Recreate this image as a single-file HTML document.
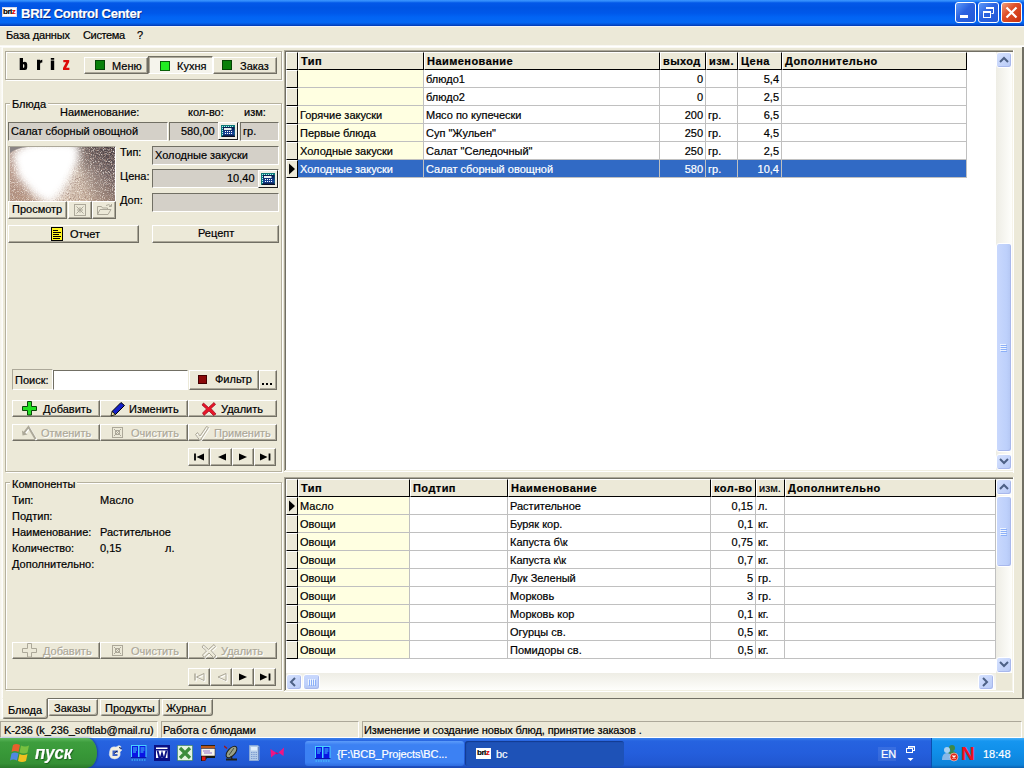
<!DOCTYPE html><html><head><meta charset="utf-8"><title>BRIZ Control Center</title><style>
*{box-sizing:border-box;margin:0;padding:0}
html,body{width:1024px;height:768px;overflow:hidden;background:#ECE9D8}
body{font-family:"Liberation Sans",sans-serif;font-size:11px;color:#000;position:relative}
.a{position:absolute}
.t{position:absolute;white-space:nowrap;line-height:13px;height:13px;-webkit-text-stroke:0.2px currentColor}
.b{font-weight:bold}
.w{color:#fff}
.dis{color:#ACA899;text-shadow:1px 1px 0 #fff}
/* classic raised button */
.btn{position:absolute;background:#ECE9D8;border:1px solid;border-color:#fff #716F64 #716F64 #fff;box-shadow:inset -1px -1px 0 #ACA899}
.btnd{position:absolute;background:#F5F4EC;border:1px solid;border-color:#716F64 #fff #fff #716F64;box-shadow:inset 1px 1px 0 #ACA899}
/* sunken gray field */
.fld{position:absolute;background:#D4D0C8;border:1px solid;border-color:#716F64 #fff #fff #716F64}
.sunk{position:absolute;border:1px solid;border-color:#ACA899 #fff #fff #ACA899}
.grp{position:absolute;border:1px solid #D0D0BF;border-radius:3px}
.hl{position:absolute;background:#C0C0C0}
</style></head><body><div class="a" style="left:0px;top:0px;width:1024px;height:26px;background:linear-gradient(180deg,#3D97FF 0%,#2A84F8 5%,#0458E8 11%,#0054E3 30%,#0058EA 50%,#0264F4 66%,#0468F4 86%,#0456DC 93%,#0038B0 100%);"></div><div class="a" style="left:0px;top:26px;width:1024px;height:1px;background:#F2F4F8;"></div><div class="a" style="left:2px;top:7px;width:15px;height:10px;background:#fff;border:1px solid #d8d8e8"></div><div class="t b" style="left:3px;top:6px;font-size:8px;line-height:11px;letter-spacing:-0.5px"><span style="color:#000">bri</span><span style="color:#e00000">z</span></div><div class="t b w" style="left:21px;top:6px;font-size:13px;line-height:16px;height:16px;letter-spacing:-0.25px;text-shadow:1px 1px 0 #0A2A80">BRIZ Control Center</div><div class="a" style="left:955px;top:2px;width:21px;height:21px;border:1px solid #fff;border-radius:3px;background:linear-gradient(135deg,#5E9BFA 0%,#2B62E0 45%,#2258D8 100%)"><div class="a" style="left:4px;top:12px;width:8px;height:3px;background:#fff"></div></div><div class="a" style="left:978px;top:2px;width:21px;height:21px;border:1px solid #fff;border-radius:3px;background:linear-gradient(135deg,#5E9BFA 0%,#2B62E0 45%,#2258D8 100%)"><svg class="a" style="left:0;top:0" width="19" height="19"><path d="M7.5 4.5h7v6h-2" fill="none" stroke="#fff" stroke-width="1"/><path d="M7 5h8" stroke="#fff" stroke-width="2"/><rect x="4.5" y="8.5" width="7" height="6" fill="none" stroke="#fff"/><path d="M4 9h8" stroke="#fff" stroke-width="2"/></svg></div><div class="a" style="left:1001px;top:2px;width:21px;height:21px;border:1px solid #fff;border-radius:3px;background:linear-gradient(135deg,#F0A080 0%,#E05028 40%,#C83010 100%)"><svg class="a" style="left:0;top:0" width="19" height="19"><path d="M4.500 4.500l10 10M14.500 4.500l-10 10" stroke="#fff" stroke-width="2.2"/></svg></div><div class="t " style="left:6px;top:29px;font-size:11px;letter-spacing:-0.15px">База данных</div><div class="t " style="left:83px;top:29px;font-size:11px;letter-spacing:-0.35px">Система</div><div class="t " style="left:137px;top:29px;font-size:11px">?</div><div class="a" style="left:0px;top:45px;width:1024px;height:3px;background:linear-gradient(180deg,#F6F4EC,#FFFFFF,#F8F6EE);"></div><div class="a" style="left:0px;top:47px;width:3px;height:672px;background:linear-gradient(90deg,#F4F2E8,#FFFFFF);"></div><div class="a" style="left:6px;top:52px;width:277px;height:29px;border:1px solid #fff"></div><div class="a" style="left:5px;top:51px;width:277px;height:29px;border:1px solid #ACA899"></div><svg class="a" style="left:19px;top:57px" width="54" height="14"><path fill-rule="evenodd" d="M0.700 1h3.300v4.300q0.900-0.600 1.900-0.600q2.300 0 2.300 2.500v3.300q0 2.500-2.300 2.500h-5.200zM4 7.200v3.600h0.600q0.700 0 0.700-0.700v-2.200q0-0.700-0.700-0.700z" fill="#000"/><path d="M18 2.800h3.100v0.900q0.800-0.900 2.200-0.900v2.700q-2.200 0-2.200 1.400v6.100h-3.100z" fill="#000"/><path d="M31.800 1h3.400v1.800h-3.400zM31.800 3.600h3.400v9.400h-3.400z" fill="#000"/><path d="M44.300 3h5.900v2l-3 5.700h3.200v2.300h-6.400v-2l3.100-5.700h-2.800z" fill="#DD0A0A"/></svg><div class="btn" style="left:84px;top:57px;width:64px;height:17px;"></div><div class="a" style="left:95px;top:60px;width:10px;height:10px;background:#0A800A;border:1px solid #044404"></div><div class="t " style="left:112px;top:60px;">Меню</div><div class="btnd" style="left:148px;top:56px;width:65px;height:18px;"></div><div class="a" style="left:160px;top:61px;width:10px;height:10px;background:#22EE22;border:1px solid #086008"></div><div class="t " style="left:177px;top:60px;">Кухня</div><div class="btn" style="left:213px;top:57px;width:64px;height:17px;"></div><div class="a" style="left:222px;top:60px;width:10px;height:10px;background:#0A800A;border:1px solid #044404"></div><div class="t " style="left:240px;top:60px;">Заказ</div><div class="a" style="left:6px;top:104px;width:277px;height:369px;border:1px solid #fff"></div><div class="a" style="left:5px;top:103px;width:277px;height:369px;border:1px solid #B5B19E"></div><div class="t " style="left:10px;top:98px;background:#ECE9D8;padding:0 2px">Блюда</div><div class="t " style="left:60px;top:106px;">Наименование:</div><div class="t " style="left:188px;top:106px;">кол-во:</div><div class="t " style="left:244px;top:106px;">изм:</div><div class="fld" style="left:8px;top:122px;width:160px;height:19px;"></div><div class="t " style="left:11px;top:125px;">Салат сборный овощной</div><div class="fld" style="left:169px;top:122px;width:70px;height:19px;"></div><div class="t " style="left:181px;top:125px;">580,00</div><div class="fld" style="left:240px;top:122px;width:39px;height:19px;"></div><div class="t " style="left:243px;top:125px;">гр.</div><div class="a" style="left:218px;top:122px;width:20px;height:18px;background:#F0EEE4;border:1px solid;border-color:#fff #202020 #202020 #fff"><svg class="a" style="left:2px;top:2px" width="14" height="12"><defs><linearGradient id="cg218" x1="0" y1="0" x2="0" y2="1"><stop offset="0" stop-color="#0A1848"/><stop offset="0.7" stop-color="#1848A0"/><stop offset="1" stop-color="#081030"/></linearGradient></defs><rect width="14" height="12" fill="#0E7878"/><rect x="2" y="2" width="11.500" height="9.500" fill="url(#cg218)"/><path d="M1 1.500h12" stroke="#A8F4F4" stroke-dasharray="1 1"/><path d="M1.500 1v10" stroke="#A8F4F4" stroke-dasharray="1 1"/><rect x="3" y="3" width="7.500" height="2" fill="#E8F0F0"/><rect x="4" y="6" width="1" height="1" fill="#fff"/><rect x="4" y="8" width="1" height="1" fill="#fff"/><rect x="6" y="6" width="1" height="1" fill="#fff"/><rect x="6" y="8" width="1" height="1" fill="#fff"/><rect x="8" y="6" width="1" height="1" fill="#fff"/><rect x="8" y="8" width="1" height="1" fill="#fff"/><rect x="10" y="6" width="1" height="1" fill="#fff"/><rect x="10" y="8" width="1" height="1" fill="#fff"/><path d="M1 11.500h13" stroke="#081028"/></svg></div><div class="sunk" style="left:8px;top:146px;width:108px;height:56px;border-color:#ACA899 #fff #fff #ACA899;background:#D8D4C8"></div><svg class="a" style="left:10px;top:147px" width="105" height="54" viewBox="0 0 106 54" preserveAspectRatio="none"><defs><linearGradient id="pg" x1="0" y1="0.2" x2="1" y2="0"><stop offset="0" stop-color="#BC9C8C"/><stop offset="0.3" stop-color="#F0E4D8"/><stop offset="0.56" stop-color="#D8C8B8"/><stop offset="0.68" stop-color="#A09088"/><stop offset="0.82" stop-color="#766868"/><stop offset="1" stop-color="#564C52"/></linearGradient><linearGradient id="pg2" x1="0" y1="0" x2="0" y2="1"><stop offset="0" stop-color="#403838" stop-opacity="0.2"/><stop offset="0.45" stop-color="#806860" stop-opacity="0"/><stop offset="1" stop-color="#B08868" stop-opacity="0.3"/></linearGradient><radialGradient id="pg3" cx="1" cy="0" r="0.6"><stop offset="0" stop-color="#342C32" stop-opacity="0.55"/><stop offset="1" stop-color="#342C32" stop-opacity="0"/></radialGradient><filter id="pn" x="0" y="0" width="100%" height="100%"><feTurbulence type="fractalNoise" baseFrequency="0.8" numOctaves="2" seed="7"/><feColorMatrix type="matrix" values="0 0 0 0 0.36  0 0 0 0 0.24  0 0 0 0 0.2  0 0 0 2.6 -1.15"/></filter><filter id="pn2" x="0" y="0" width="100%" height="100%"><feTurbulence type="fractalNoise" baseFrequency="0.9" numOctaves="1" seed="11"/><feColorMatrix type="matrix" values="0 0 0 0 1  0 0 0 0 0.95  0 0 0 0 0.88  0 2.6 0 0 -1.3"/></filter><filter id="pb" x="-40%" y="-40%" width="180%" height="180%"><feGaussianBlur stdDeviation="4.5"/></filter></defs><rect width="106" height="54" fill="url(#pg)"/><rect width="106" height="54" fill="url(#pg2)"/><rect width="106" height="54" fill="url(#pg3)"/><rect width="106" height="54" filter="url(#pn)"/><rect width="106" height="54" filter="url(#pn2)"/><path d="M2 6L20 -4L68 -4L70 10L62 28L54 44L42 58L26 50L8 30z" fill="#fff" filter="url(#pb)"/><path d="M12 6L62 0L62 14L48 36L28 36L14 22z" fill="#fff"  filter="url(#pb)"/><path d="M0 0h17q-11 1-17 6z" fill="#8A8484"/></svg><div class="btn" style="left:8px;top:201px;width:59px;height:18px;"></div><div class="t " style="left:12px;top:203px;">Просмотр</div><div class="btn" style="left:68px;top:201px;width:24px;height:18px;"></div><svg class="a" style="left:74px;top:204px" width="13" height="13"><rect x="0.5" y="0.5" width="11" height="11" fill="none" stroke="#ACA899"/><path d="M2.500 2.500l7 7M9.500 2.500l-7 7M6 3.500l2.500 2.500l-2.500 2.500l-2.500-2.500z" fill="none" stroke="#ACA899"/></svg><div class="btn" style="left:92px;top:201px;width:24px;height:18px;"></div><svg class="a" style="left:96px;top:203px" width="17" height="13"><path d="M1.500 11.500v-8h4l1 1.500h5v2M1.500 11.500l2.500-5h11l-3 5z" fill="none" stroke="#ACA899"/><path d="M10 2.500q3-2 5 0.500M15.500 1v2.500h-2.500" fill="none" stroke="#ACA899"/></svg><div class="t " style="left:120px;top:146px;">Тип:</div><div class="t " style="left:120px;top:170px;">Цена:</div><div class="t " style="left:120px;top:194px;">Доп:</div><div class="fld" style="left:152px;top:146px;width:127px;height:19px;"></div><div class="t " style="left:155px;top:149px;">Холодные закуски</div><div class="fld" style="left:152px;top:169px;width:127px;height:19px;"></div><div class="t " style="left:227px;top:172px;">10,40</div><div class="a" style="left:258px;top:170px;width:20px;height:18px;background:#F0EEE4;border:1px solid;border-color:#fff #202020 #202020 #fff"><svg class="a" style="left:2px;top:2px" width="14" height="12"><defs><linearGradient id="cg258" x1="0" y1="0" x2="0" y2="1"><stop offset="0" stop-color="#0A1848"/><stop offset="0.7" stop-color="#1848A0"/><stop offset="1" stop-color="#081030"/></linearGradient></defs><rect width="14" height="12" fill="#0E7878"/><rect x="2" y="2" width="11.500" height="9.500" fill="url(#cg258)"/><path d="M1 1.500h12" stroke="#A8F4F4" stroke-dasharray="1 1"/><path d="M1.500 1v10" stroke="#A8F4F4" stroke-dasharray="1 1"/><rect x="3" y="3" width="7.500" height="2" fill="#E8F0F0"/><rect x="4" y="6" width="1" height="1" fill="#fff"/><rect x="4" y="8" width="1" height="1" fill="#fff"/><rect x="6" y="6" width="1" height="1" fill="#fff"/><rect x="6" y="8" width="1" height="1" fill="#fff"/><rect x="8" y="6" width="1" height="1" fill="#fff"/><rect x="8" y="8" width="1" height="1" fill="#fff"/><rect x="10" y="6" width="1" height="1" fill="#fff"/><rect x="10" y="8" width="1" height="1" fill="#fff"/><path d="M1 11.500h13" stroke="#081028"/></svg></div><div class="fld" style="left:152px;top:193px;width:127px;height:19px;"></div><div class="btn" style="left:8px;top:225px;width:131px;height:18px;"></div><div class="a" style="left:51px;top:227px;width:12px;height:14px;background:#FFF420;border:1px solid #000"></div><div class="a" style="left:53px;top:230px;width:5px;height:1px;background:#000;"></div><div class="a" style="left:53px;top:232px;width:8px;height:1px;background:#000;"></div><div class="a" style="left:53px;top:234px;width:6px;height:1px;background:#000;"></div><div class="a" style="left:53px;top:236px;width:8px;height:1px;background:#000;"></div><div class="a" style="left:53px;top:238px;width:7px;height:1px;background:#000;"></div><div class="t " style="left:70px;top:228px;">Отчет</div><div class="btn" style="left:152px;top:225px;width:127px;height:18px;"></div><div class="t " style="left:198px;top:227px;">Рецепт</div><div class="fld" style="left:12px;top:369px;width:41px;height:21px;background:#ECE9D8;box-shadow:none;border-color:#ACA899 #fff #fff #ACA899"></div><div class="t " style="left:15px;top:374px;">Поиск:</div><div class="fld" style="left:53px;top:370px;width:135px;height:20px;background:#fff"></div><div class="btn" style="left:189px;top:370px;width:70px;height:20px;"></div><div class="a" style="left:198px;top:375px;width:9px;height:9px;background:#8B0A0A;border:1px solid #400"></div><div class="t " style="left:215px;top:373px;">Фильтр</div><div class="btn" style="left:259px;top:370px;width:18px;height:20px;"></div><div class="a" style="left:262px;top:383px;width:2px;height:2px;background:#000;"></div><div class="a" style="left:266px;top:383px;width:2px;height:2px;background:#000;"></div><div class="a" style="left:270px;top:383px;width:2px;height:2px;background:#000;"></div><div class="btn" style="left:12px;top:400px;width:88px;height:17px;"></div><svg class="a" style="left:22px;top:401px" width="16" height="15"><path d="M5.500 0.500h4v5h5v4h-5v4.500h-4v-4.500h-5v-4h5z" fill="#22E022" stroke="#0A480A"/></svg><div class="t " style="left:43px;top:403px;">Добавить</div><div class="btn" style="left:100px;top:400px;width:88px;height:17px;"></div><svg class="a" style="left:110px;top:401px" width="16" height="16"><path d="M11 1.500l3.500 3l-9 9l-3.500-3z" fill="#1420C8" stroke="#000"/><path d="M2 10.500l3.500 3l-4.500 1.500z" fill="#F4E8A8" stroke="#000" stroke-width="0.800"/></svg><div class="t " style="left:129px;top:403px;">Изменить</div><div class="btn" style="left:188px;top:400px;width:89px;height:17px;"></div><svg class="a" style="left:201px;top:401px" width="16" height="16"><path d="M2.500 2l5 4.500l5.500-5l1.500 2l-4.500 4l5 5.500l-2.500 1.500l-4.500-4.500l-5 4.500l-1.500-2.500l4-4l-4.500-4z" fill="#E81428" stroke="#98081C" stroke-width="0.700"/></svg><div class="t " style="left:221px;top:403px;">Удалить</div><div class="btn" style="left:12px;top:424px;width:88px;height:17px;"></div><svg class="a" style="left:21px;top:425px" width="18" height="16"><path d="M3.500 9.500l5-6.500l7 12" fill="none" stroke="#fff" stroke-width="2"/><path d="M2.500 8.500l5-6.500l7 12" fill="none" stroke="#ACA899" stroke-width="2"/><path d="M1 5.500l0.500 5l5-1z" fill="#ACA899"/></svg><div class="t dis" style="left:41px;top:427px;">Отменить</div><div class="btn" style="left:100px;top:424px;width:88px;height:17px;"></div><svg class="a" style="left:112px;top:427px" width="12" height="12"><rect x="0.5" y="0.5" width="10" height="10" fill="none" stroke="#ACA899"/><path d="M2 2l7 7M9 2l-7 7M3.5 3.5h4v4h-4z" fill="none" stroke="#ACA899"/></svg><div class="t dis" style="left:131px;top:427px;">Очистить</div><div class="btn" style="left:188px;top:424px;width:89px;height:17px;"></div><svg class="a" style="left:193px;top:400px;top:425px" width="18" height="16"><path d="M2.500 9.500l2-2l2.500 3.500l6.500-9.500l2 1l-8.500 13z" fill="none" stroke="#fff" transform="translate(1,1)"/><path d="M2.500 9.500l2-2l2.500 3.500l6.500-9.500l2 1l-8.500 13z" fill="none" stroke="#ACA899"/></svg><div class="t dis" style="left:214px;top:427px;">Применить</div><div class="btn" style="left:188px;top:448px;width:22px;height:18px;"></div><svg class="a" style="left:189px;top:450px" width="20" height="14"><path d="M6 3.500v7" stroke="#000" stroke-width="1.800"/><path d="M15 3.500v7l-7.500-3.500z" fill="#000"/></svg><div class="btn" style="left:210px;top:448px;width:22px;height:18px;"></div><svg class="a" style="left:211px;top:450px" width="20" height="14"><path d="M15 3.500v7l-8-3.500z" fill="#000"/></svg><div class="btn" style="left:232px;top:448px;width:22px;height:18px;"></div><svg class="a" style="left:233px;top:450px" width="20" height="14"><path d="M6 3.500v7l8-3.500z" fill="#000"/></svg><div class="btn" style="left:254px;top:448px;width:22px;height:18px;"></div><svg class="a" style="left:255px;top:450px" width="20" height="14"><path d="M14.500 3.500v7" stroke="#000" stroke-width="1.800"/><path d="M5 3.500v7l7.500-3.500z" fill="#000"/></svg><div class="a" style="left:284px;top:50px;width:730px;height:1px;background:#ACA899;"></div><div class="a" style="left:284px;top:50px;width:1px;height:422px;background:#ACA899;"></div><div class="a" style="left:285px;top:51px;width:728px;height:1px;background:#716F64;"></div><div class="a" style="left:285px;top:51px;width:1px;height:420px;background:#716F64;"></div><div class="a" style="left:286px;top:52px;width:710px;height:418px;background:#fff;"></div><div class="a" style="left:1012px;top:52px;width:1px;height:420px;background:#F6F4EA;"></div><div class="a" style="left:1013px;top:50px;width:1px;height:423px;background:#fff;"></div><div class="a" style="left:285px;top:470px;width:728px;height:1px;background:#F1EFE2;"></div><div class="a" style="left:284px;top:471px;width:730px;height:1px;background:#fff;"></div><div class="a" style="left:1022px;top:47px;width:2px;height:652px;background:#716F64;"></div><div class="a" style="left:996px;top:52px;width:16px;height:418px;background:linear-gradient(90deg,#EEEDE5,#FEFEFB);"></div><div class="a" style="left:996px;top:52px;width:16px;height:16px;border:1px solid #fff;border-radius:3px;background:linear-gradient(135deg,#D6E2FF,#B8CAF6);box-shadow:inset -1px -1px 0 #A8B8EC"></div><svg class="a" style="left:999px;top:56px" width="10" height="10"><path d="M1 6l4-4l4 4" fill="none" stroke="#4D6185" stroke-width="2"/></svg><div class="a" style="left:996px;top:454px;width:16px;height:16px;border:1px solid #fff;border-radius:3px;background:linear-gradient(135deg,#D6E2FF,#B8CAF6);box-shadow:inset -1px -1px 0 #A8B8EC"></div><svg class="a" style="left:999px;top:457px" width="10" height="10"><path d="M1 2l4 4l4-4" fill="none" stroke="#4D6185" stroke-width="2"/></svg><div class="a" style="left:996px;top:243px;width:16px;height:209px;border:1px solid #fff;border-radius:3px;background:linear-gradient(90deg,#C9D8FD,#BDD0FB 70%,#B4C6F2);box-shadow:inset -1px -1px 0 #A8B8EC"></div><div class="a" style="left:1000px;top:344px;width:6px;height:1px;background:#EEF4FE;"></div><div class="a" style="left:1001px;top:345px;width:6px;height:1px;background:#8CB0F8;"></div><div class="a" style="left:1000px;top:346px;width:6px;height:1px;background:#EEF4FE;"></div><div class="a" style="left:1001px;top:347px;width:6px;height:1px;background:#8CB0F8;"></div><div class="a" style="left:1000px;top:348px;width:6px;height:1px;background:#EEF4FE;"></div><div class="a" style="left:1001px;top:349px;width:6px;height:1px;background:#8CB0F8;"></div><div class="a" style="left:1000px;top:350px;width:6px;height:1px;background:#EEF4FE;"></div><div class="a" style="left:1001px;top:351px;width:6px;height:1px;background:#8CB0F8;"></div><div class="a" style="left:286px;top:52px;width:12px;height:18px;background:#ECE9D8;border-left:1px solid #fff;border-top:1px solid #fff;border-right:1px solid #000;border-bottom:1px solid #000"></div><div class="a" style="left:298px;top:52px;width:126px;height:18px;background:#ECE9D8;border-left:1px solid #fff;border-top:1px solid #fff;border-right:1px solid #000;border-bottom:1px solid #000"></div><div class="t b" style="left:301px;top:55px;letter-spacing:0.45px">Тип</div><div class="a" style="left:424px;top:52px;width:236px;height:18px;background:#ECE9D8;border-left:1px solid #fff;border-top:1px solid #fff;border-right:1px solid #000;border-bottom:1px solid #000"></div><div class="t b" style="left:427px;top:55px;letter-spacing:0.45px">Наименование</div><div class="a" style="left:660px;top:52px;width:46px;height:18px;background:#ECE9D8;border-left:1px solid #fff;border-top:1px solid #fff;border-right:1px solid #000;border-bottom:1px solid #000"></div><div class="t b" style="left:663px;top:55px;letter-spacing:0.45px">выход</div><div class="a" style="left:706px;top:52px;width:32px;height:18px;background:#ECE9D8;border-left:1px solid #fff;border-top:1px solid #fff;border-right:1px solid #000;border-bottom:1px solid #000"></div><div class="t b" style="left:709px;top:55px;letter-spacing:0.45px">изм.</div><div class="a" style="left:738px;top:52px;width:44px;height:18px;background:#ECE9D8;border-left:1px solid #fff;border-top:1px solid #fff;border-right:1px solid #000;border-bottom:1px solid #000"></div><div class="t b" style="left:741px;top:55px;letter-spacing:0.45px">Цена</div><div class="a" style="left:782px;top:52px;width:185px;height:18px;background:#ECE9D8;border-left:1px solid #fff;border-top:1px solid #fff;border-right:1px solid #000;border-bottom:1px solid #000"></div><div class="t b" style="left:785px;top:55px;letter-spacing:0.45px">Дополнительно</div><div class="a" style="left:286px;top:70px;width:12px;height:18px;background:#ECE9D8;border-left:1px solid #fff;border-top:1px solid #fff;border-right:1px solid #000;border-bottom:1px solid #000"></div><div class="a" style="left:298px;top:70px;width:126px;height:18px;background:#FFFFE1;border-right:1px solid #C0C0C0;border-bottom:1px solid #C0C0C0"></div><div class="a" style="left:424px;top:70px;width:236px;height:18px;background:#fff;border-right:1px solid #C0C0C0;border-bottom:1px solid #C0C0C0"></div><div class="t " style="left:426px;top:73px;">блюдо1</div><div class="a" style="left:660px;top:70px;width:46px;height:18px;background:#fff;border-right:1px solid #C0C0C0;border-bottom:1px solid #C0C0C0"></div><div class="t " style="left:660px;top:73px;width:43px;text-align:right">0</div><div class="a" style="left:706px;top:70px;width:32px;height:18px;background:#fff;border-right:1px solid #C0C0C0;border-bottom:1px solid #C0C0C0"></div><div class="a" style="left:738px;top:70px;width:44px;height:18px;background:#fff;border-right:1px solid #C0C0C0;border-bottom:1px solid #C0C0C0"></div><div class="t " style="left:738px;top:73px;width:41px;text-align:right">5,4</div><div class="a" style="left:782px;top:70px;width:185px;height:18px;background:#fff;border-right:1px solid #C0C0C0;border-bottom:1px solid #C0C0C0"></div><div class="a" style="left:286px;top:88px;width:12px;height:18px;background:#ECE9D8;border-left:1px solid #fff;border-top:1px solid #fff;border-right:1px solid #000;border-bottom:1px solid #000"></div><div class="a" style="left:298px;top:88px;width:126px;height:18px;background:#FFFFE1;border-right:1px solid #C0C0C0;border-bottom:1px solid #C0C0C0"></div><div class="a" style="left:424px;top:88px;width:236px;height:18px;background:#fff;border-right:1px solid #C0C0C0;border-bottom:1px solid #C0C0C0"></div><div class="t " style="left:426px;top:91px;">блюдо2</div><div class="a" style="left:660px;top:88px;width:46px;height:18px;background:#fff;border-right:1px solid #C0C0C0;border-bottom:1px solid #C0C0C0"></div><div class="t " style="left:660px;top:91px;width:43px;text-align:right">0</div><div class="a" style="left:706px;top:88px;width:32px;height:18px;background:#fff;border-right:1px solid #C0C0C0;border-bottom:1px solid #C0C0C0"></div><div class="a" style="left:738px;top:88px;width:44px;height:18px;background:#fff;border-right:1px solid #C0C0C0;border-bottom:1px solid #C0C0C0"></div><div class="t " style="left:738px;top:91px;width:41px;text-align:right">2,5</div><div class="a" style="left:782px;top:88px;width:185px;height:18px;background:#fff;border-right:1px solid #C0C0C0;border-bottom:1px solid #C0C0C0"></div><div class="a" style="left:286px;top:106px;width:12px;height:18px;background:#ECE9D8;border-left:1px solid #fff;border-top:1px solid #fff;border-right:1px solid #000;border-bottom:1px solid #000"></div><div class="a" style="left:298px;top:106px;width:126px;height:18px;background:#FFFFE1;border-right:1px solid #C0C0C0;border-bottom:1px solid #C0C0C0"></div><div class="t " style="left:300px;top:109px;">Горячие закуски</div><div class="a" style="left:424px;top:106px;width:236px;height:18px;background:#fff;border-right:1px solid #C0C0C0;border-bottom:1px solid #C0C0C0"></div><div class="t " style="left:426px;top:109px;">Мясо по купечески</div><div class="a" style="left:660px;top:106px;width:46px;height:18px;background:#fff;border-right:1px solid #C0C0C0;border-bottom:1px solid #C0C0C0"></div><div class="t " style="left:660px;top:109px;width:43px;text-align:right">200</div><div class="a" style="left:706px;top:106px;width:32px;height:18px;background:#fff;border-right:1px solid #C0C0C0;border-bottom:1px solid #C0C0C0"></div><div class="t " style="left:708px;top:109px;">гр.</div><div class="a" style="left:738px;top:106px;width:44px;height:18px;background:#fff;border-right:1px solid #C0C0C0;border-bottom:1px solid #C0C0C0"></div><div class="t " style="left:738px;top:109px;width:41px;text-align:right">6,5</div><div class="a" style="left:782px;top:106px;width:185px;height:18px;background:#fff;border-right:1px solid #C0C0C0;border-bottom:1px solid #C0C0C0"></div><div class="a" style="left:286px;top:124px;width:12px;height:18px;background:#ECE9D8;border-left:1px solid #fff;border-top:1px solid #fff;border-right:1px solid #000;border-bottom:1px solid #000"></div><div class="a" style="left:298px;top:124px;width:126px;height:18px;background:#FFFFE1;border-right:1px solid #C0C0C0;border-bottom:1px solid #C0C0C0"></div><div class="t " style="left:300px;top:127px;">Первые блюда</div><div class="a" style="left:424px;top:124px;width:236px;height:18px;background:#fff;border-right:1px solid #C0C0C0;border-bottom:1px solid #C0C0C0"></div><div class="t " style="left:426px;top:127px;">Суп "Жульен"</div><div class="a" style="left:660px;top:124px;width:46px;height:18px;background:#fff;border-right:1px solid #C0C0C0;border-bottom:1px solid #C0C0C0"></div><div class="t " style="left:660px;top:127px;width:43px;text-align:right">250</div><div class="a" style="left:706px;top:124px;width:32px;height:18px;background:#fff;border-right:1px solid #C0C0C0;border-bottom:1px solid #C0C0C0"></div><div class="t " style="left:708px;top:127px;">гр.</div><div class="a" style="left:738px;top:124px;width:44px;height:18px;background:#fff;border-right:1px solid #C0C0C0;border-bottom:1px solid #C0C0C0"></div><div class="t " style="left:738px;top:127px;width:41px;text-align:right">4,5</div><div class="a" style="left:782px;top:124px;width:185px;height:18px;background:#fff;border-right:1px solid #C0C0C0;border-bottom:1px solid #C0C0C0"></div><div class="a" style="left:286px;top:142px;width:12px;height:18px;background:#ECE9D8;border-left:1px solid #fff;border-top:1px solid #fff;border-right:1px solid #000;border-bottom:1px solid #000"></div><div class="a" style="left:298px;top:142px;width:126px;height:18px;background:#FFFFE1;border-right:1px solid #C0C0C0;border-bottom:1px solid #C0C0C0"></div><div class="t " style="left:300px;top:145px;">Холодные закуски</div><div class="a" style="left:424px;top:142px;width:236px;height:18px;background:#fff;border-right:1px solid #C0C0C0;border-bottom:1px solid #C0C0C0"></div><div class="t " style="left:426px;top:145px;">Салат "Селедочный"</div><div class="a" style="left:660px;top:142px;width:46px;height:18px;background:#fff;border-right:1px solid #C0C0C0;border-bottom:1px solid #C0C0C0"></div><div class="t " style="left:660px;top:145px;width:43px;text-align:right">250</div><div class="a" style="left:706px;top:142px;width:32px;height:18px;background:#fff;border-right:1px solid #C0C0C0;border-bottom:1px solid #C0C0C0"></div><div class="t " style="left:708px;top:145px;">гр.</div><div class="a" style="left:738px;top:142px;width:44px;height:18px;background:#fff;border-right:1px solid #C0C0C0;border-bottom:1px solid #C0C0C0"></div><div class="t " style="left:738px;top:145px;width:41px;text-align:right">2,5</div><div class="a" style="left:782px;top:142px;width:185px;height:18px;background:#fff;border-right:1px solid #C0C0C0;border-bottom:1px solid #C0C0C0"></div><div class="a" style="left:286px;top:160px;width:12px;height:18px;background:#ECE9D8;border-left:1px solid #fff;border-top:1px solid #fff;border-right:1px solid #000;border-bottom:1px solid #000"></div><svg class="a" style="left:288px;top:163px" width="8" height="12"><path d="M1 0.500v11l6-5.500z" fill="#000"/></svg><div class="a" style="left:298px;top:160px;width:126px;height:18px;background:#316AC5;border-right:1px solid #C0C0C0;border-bottom:1px solid #C0C0C0"></div><div class="t w" style="left:300px;top:163px;">Холодные закуски</div><div class="a" style="left:424px;top:160px;width:236px;height:18px;background:#316AC5;border-right:1px solid #C0C0C0;border-bottom:1px solid #C0C0C0"></div><div class="t w" style="left:426px;top:163px;">Салат сборный овощной</div><div class="a" style="left:660px;top:160px;width:46px;height:18px;background:#316AC5;border-right:1px solid #C0C0C0;border-bottom:1px solid #C0C0C0"></div><div class="t w" style="left:660px;top:163px;width:43px;text-align:right">580</div><div class="a" style="left:706px;top:160px;width:32px;height:18px;background:#316AC5;border-right:1px solid #C0C0C0;border-bottom:1px solid #C0C0C0"></div><div class="t w" style="left:708px;top:163px;">гр.</div><div class="a" style="left:738px;top:160px;width:44px;height:18px;background:#316AC5;border-right:1px solid #C0C0C0;border-bottom:1px solid #C0C0C0"></div><div class="t w" style="left:738px;top:163px;width:41px;text-align:right">10,4</div><div class="a" style="left:782px;top:160px;width:185px;height:18px;background:#316AC5;border-right:1px solid #C0C0C0;border-bottom:1px solid #C0C0C0"></div><div class="a" style="left:6px;top:483px;width:277px;height:208px;border:1px solid #fff"></div><div class="a" style="left:5px;top:482px;width:277px;height:208px;border:1px solid #B5B19E"></div><div class="t " style="left:10px;top:478px;background:#ECE9D8;padding:0 2px">Компоненты</div><div class="t " style="left:12px;top:494px;">Тип:</div><div class="t " style="left:100px;top:494px;">Масло</div><div class="t " style="left:12px;top:510px;">Подтип:</div><div class="t " style="left:12px;top:526px;">Наименование:</div><div class="t " style="left:100px;top:526px;">Растительное</div><div class="t " style="left:12px;top:542px;">Количество:</div><div class="t " style="left:100px;top:542px;">0,15</div><div class="t " style="left:12px;top:558px;">Дополнительно:</div><div class="t " style="left:165px;top:542px;">л.</div><div class="btn" style="left:12px;top:642px;width:88px;height:17px;"></div><svg class="a" style="left:22px;top:643px" width="16" height="15"><path d="M5.500 0.500h4v5h5v4h-5v4.500h-4v-4.500h-5v-4h5z" fill="none" stroke="#ACA899"/></svg><div class="t dis" style="left:43px;top:645px;">Добавить</div><div class="btn" style="left:100px;top:642px;width:88px;height:17px;"></div><svg class="a" style="left:112px;top:645px" width="12" height="12"><rect x="0.5" y="0.5" width="10" height="10" fill="none" stroke="#ACA899"/><path d="M2 2l7 7M9 2l-7 7M3.5 3.5h4v4h-4z" fill="none" stroke="#ACA899"/></svg><div class="t dis" style="left:131px;top:645px;">Очистить</div><div class="btn" style="left:188px;top:642px;width:89px;height:17px;"></div><svg class="a" style="left:201px;top:643px" width="18" height="18"><path d="M2.500 2l5 4.500l5.500-5l1.500 2l-4.500 4l5 5.500l-2.500 1.500l-4.500-4.500l-5 4.500l-1.500-2.500l4-4l-4.500-4z" fill="none" stroke="#fff" transform="translate(1,1)"/><path d="M2.500 2l5 4.500l5.500-5l1.500 2l-4.500 4l5 5.500l-2.500 1.500l-4.500-4.500l-5 4.500l-1.500-2.500l4-4l-4.500-4z" fill="none" stroke="#ACA899"/></svg><div class="t dis" style="left:221px;top:645px;">Удалить</div><div class="btn" style="left:188px;top:668px;width:22px;height:18px;"></div><svg class="a" style="left:189px;top:670px" width="20" height="14"><path d="M6 3.500v7" stroke="#fff" stroke-width="1.500" transform="translate(1,1)"/><path d="M15 3.500v7l-7.500-3.500z" fill="none" stroke="#fff" transform="translate(1,1)"/><path d="M6 3.500v7" stroke="#ACA899" stroke-width="1.500" transform=""/><path d="M15 3.500v7l-7.500-3.500z" fill="none" stroke="#ACA899" transform=""/></svg><div class="btn" style="left:210px;top:668px;width:22px;height:18px;"></div><svg class="a" style="left:211px;top:670px" width="20" height="14"><path d="M15 3.500v7l-8-3.500z" fill="none" stroke="#fff" transform="translate(1,1)"/><path d="M15 3.500v7l-8-3.500z" fill="none" stroke="#ACA899" transform=""/></svg><div class="btn" style="left:232px;top:668px;width:22px;height:18px;"></div><svg class="a" style="left:233px;top:670px" width="20" height="14"><path d="M6 3.500v7l8-3.500z" fill="#000"/></svg><div class="btn" style="left:254px;top:668px;width:22px;height:18px;"></div><svg class="a" style="left:255px;top:670px" width="20" height="14"><path d="M14.500 3.500v7" stroke="#000" stroke-width="1.800"/><path d="M5 3.500v7l7.500-3.500z" fill="#000"/></svg><div class="a" style="left:284px;top:477px;width:730px;height:1px;background:#ACA899;"></div><div class="a" style="left:284px;top:477px;width:1px;height:215px;background:#ACA899;"></div><div class="a" style="left:285px;top:478px;width:728px;height:1px;background:#716F64;"></div><div class="a" style="left:285px;top:478px;width:1px;height:213px;background:#716F64;"></div><div class="a" style="left:286px;top:479px;width:710px;height:194px;background:#fff;"></div><div class="a" style="left:1012px;top:479px;width:1px;height:212px;background:#F6F4EA;"></div><div class="a" style="left:1013px;top:477px;width:1px;height:216px;background:#fff;"></div><div class="a" style="left:285px;top:690px;width:728px;height:1px;background:#F1EFE2;"></div><div class="a" style="left:284px;top:691px;width:730px;height:1px;background:#fff;"></div><div class="a" style="left:996px;top:479px;width:16px;height:194px;background:linear-gradient(90deg,#EEEDE5,#FEFEFB);"></div><div class="a" style="left:996px;top:479px;width:16px;height:16px;border:1px solid #fff;border-radius:3px;background:linear-gradient(135deg,#D6E2FF,#B8CAF6);box-shadow:inset -1px -1px 0 #A8B8EC"></div><svg class="a" style="left:999px;top:483px" width="10" height="10"><path d="M1 6l4-4l4 4" fill="none" stroke="#4D6185" stroke-width="2"/></svg><div class="a" style="left:996px;top:657px;width:16px;height:16px;border:1px solid #fff;border-radius:3px;background:linear-gradient(135deg,#D6E2FF,#B8CAF6);box-shadow:inset -1px -1px 0 #A8B8EC"></div><svg class="a" style="left:999px;top:660px" width="10" height="10"><path d="M1 2l4 4l4-4" fill="none" stroke="#4D6185" stroke-width="2"/></svg><div class="a" style="left:996px;top:496px;width:16px;height:71px;border:1px solid #fff;border-radius:3px;background:linear-gradient(90deg,#C9D8FD,#BDD0FB 70%,#B4C6F2);box-shadow:inset -1px -1px 0 #A8B8EC"></div><div class="a" style="left:1000px;top:528px;width:6px;height:1px;background:#EEF4FE;"></div><div class="a" style="left:1001px;top:529px;width:6px;height:1px;background:#8CB0F8;"></div><div class="a" style="left:1000px;top:530px;width:6px;height:1px;background:#EEF4FE;"></div><div class="a" style="left:1001px;top:531px;width:6px;height:1px;background:#8CB0F8;"></div><div class="a" style="left:1000px;top:532px;width:6px;height:1px;background:#EEF4FE;"></div><div class="a" style="left:1001px;top:533px;width:6px;height:1px;background:#8CB0F8;"></div><div class="a" style="left:1000px;top:534px;width:6px;height:1px;background:#EEF4FE;"></div><div class="a" style="left:1001px;top:535px;width:6px;height:1px;background:#8CB0F8;"></div><div class="a" style="left:286px;top:673px;width:710px;height:17px;background:linear-gradient(180deg,#EEEDE5,#FEFEFB);"></div><div class="a" style="left:996px;top:673px;width:16px;height:17px;background:#ECE9D8;"></div><div class="a" style="left:286px;top:674px;width:16px;height:16px;border:1px solid #fff;border-radius:3px;background:linear-gradient(135deg,#D6E2FF,#B8CAF6);box-shadow:inset -1px -1px 0 #A8B8EC"></div><svg class="a" style="left:289px;top:677px" width="10" height="10"><path d="M6 1l-4 4l4 4" fill="none" stroke="#4D6185" stroke-width="2"/></svg><div class="a" style="left:978px;top:674px;width:16px;height:16px;border:1px solid #fff;border-radius:3px;background:linear-gradient(135deg,#D6E2FF,#B8CAF6);box-shadow:inset -1px -1px 0 #A8B8EC"></div><svg class="a" style="left:981px;top:677px" width="10" height="10"><path d="M2 1l4 4l-4 4" fill="none" stroke="#4D6185" stroke-width="2"/></svg><div class="a" style="left:303px;top:674px;width:17px;height:16px;border:1px solid #fff;border-radius:3px;background:linear-gradient(180deg,#C9D8FD,#BDD0FB 70%,#B4C6F2);box-shadow:inset -1px -1px 0 #A8B8EC"></div><div class="a" style="left:308px;top:679px;width:1px;height:6px;background:#EEF4FE;"></div><div class="a" style="left:309px;top:680px;width:1px;height:6px;background:#8CB0F8;"></div><div class="a" style="left:310px;top:679px;width:1px;height:6px;background:#EEF4FE;"></div><div class="a" style="left:311px;top:680px;width:1px;height:6px;background:#8CB0F8;"></div><div class="a" style="left:312px;top:679px;width:1px;height:6px;background:#EEF4FE;"></div><div class="a" style="left:313px;top:680px;width:1px;height:6px;background:#8CB0F8;"></div><div class="a" style="left:314px;top:679px;width:1px;height:6px;background:#EEF4FE;"></div><div class="a" style="left:315px;top:680px;width:1px;height:6px;background:#8CB0F8;"></div><div class="a" style="left:286px;top:479px;width:12px;height:18px;background:#ECE9D8;border-left:1px solid #fff;border-top:1px solid #fff;border-right:1px solid #000;border-bottom:1px solid #000"></div><div class="a" style="left:298px;top:479px;width:112px;height:18px;background:#ECE9D8;border-left:1px solid #fff;border-top:1px solid #fff;border-right:1px solid #000;border-bottom:1px solid #000"></div><div class="t b" style="left:301px;top:482px;letter-spacing:0.45px">Тип</div><div class="a" style="left:410px;top:479px;width:98px;height:18px;background:#ECE9D8;border-left:1px solid #fff;border-top:1px solid #fff;border-right:1px solid #000;border-bottom:1px solid #000"></div><div class="t b" style="left:413px;top:482px;letter-spacing:0.45px">Подтип</div><div class="a" style="left:508px;top:479px;width:203px;height:18px;background:#ECE9D8;border-left:1px solid #fff;border-top:1px solid #fff;border-right:1px solid #000;border-bottom:1px solid #000"></div><div class="t b" style="left:511px;top:482px;letter-spacing:0.45px">Наименование</div><div class="a" style="left:711px;top:479px;width:45px;height:18px;background:#ECE9D8;border-left:1px solid #fff;border-top:1px solid #fff;border-right:1px solid #000;border-bottom:1px solid #000"></div><div class="t b" style="left:714px;top:482px;letter-spacing:0.45px">кол-во</div><div class="a" style="left:756px;top:479px;width:29px;height:18px;background:#ECE9D8;border-left:1px solid #fff;border-top:1px solid #fff;border-right:1px solid #000;border-bottom:1px solid #000"></div><div class="t " style="left:759px;top:482px;">изм.</div><div class="a" style="left:785px;top:479px;width:211px;height:18px;background:#ECE9D8;border-left:1px solid #fff;border-top:1px solid #fff;border-right:1px solid #000;border-bottom:1px solid #000"></div><div class="t b" style="left:788px;top:482px;letter-spacing:0.45px">Дополнительно</div><div class="a" style="left:286px;top:497px;width:12px;height:18px;background:#ECE9D8;border-left:1px solid #fff;border-top:1px solid #fff;border-right:1px solid #000;border-bottom:1px solid #000"></div><svg class="a" style="left:288px;top:500px" width="8" height="12"><path d="M1 0.500v11l6-5.500z" fill="#000"/></svg><div class="a" style="left:298px;top:497px;width:112px;height:18px;background:#FFFFE1;border-right:1px solid #C0C0C0;border-bottom:1px solid #C0C0C0"></div><div class="t " style="left:300px;top:500px;">Масло</div><div class="a" style="left:410px;top:497px;width:98px;height:18px;background:#fff;border-right:1px solid #C0C0C0;border-bottom:1px solid #C0C0C0"></div><div class="a" style="left:508px;top:497px;width:203px;height:18px;background:#fff;border-right:1px solid #C0C0C0;border-bottom:1px solid #C0C0C0"></div><div class="t " style="left:510px;top:500px;">Растительное</div><div class="a" style="left:711px;top:497px;width:45px;height:18px;background:#fff;border-right:1px solid #C0C0C0;border-bottom:1px solid #C0C0C0"></div><div class="t " style="left:711px;top:500px;width:42px;text-align:right">0,15</div><div class="a" style="left:756px;top:497px;width:29px;height:18px;background:#fff;border-right:1px solid #C0C0C0;border-bottom:1px solid #C0C0C0"></div><div class="t " style="left:758px;top:500px;">л.</div><div class="a" style="left:785px;top:497px;width:211px;height:18px;background:#fff;border-right:1px solid #C0C0C0;border-bottom:1px solid #C0C0C0"></div><div class="a" style="left:286px;top:515px;width:12px;height:18px;background:#ECE9D8;border-left:1px solid #fff;border-top:1px solid #fff;border-right:1px solid #000;border-bottom:1px solid #000"></div><div class="a" style="left:298px;top:515px;width:112px;height:18px;background:#FFFFE1;border-right:1px solid #C0C0C0;border-bottom:1px solid #C0C0C0"></div><div class="t " style="left:300px;top:518px;">Овощи</div><div class="a" style="left:410px;top:515px;width:98px;height:18px;background:#fff;border-right:1px solid #C0C0C0;border-bottom:1px solid #C0C0C0"></div><div class="a" style="left:508px;top:515px;width:203px;height:18px;background:#fff;border-right:1px solid #C0C0C0;border-bottom:1px solid #C0C0C0"></div><div class="t " style="left:510px;top:518px;">Буряк кор.</div><div class="a" style="left:711px;top:515px;width:45px;height:18px;background:#fff;border-right:1px solid #C0C0C0;border-bottom:1px solid #C0C0C0"></div><div class="t " style="left:711px;top:518px;width:42px;text-align:right">0,1</div><div class="a" style="left:756px;top:515px;width:29px;height:18px;background:#fff;border-right:1px solid #C0C0C0;border-bottom:1px solid #C0C0C0"></div><div class="t " style="left:758px;top:518px;">кг.</div><div class="a" style="left:785px;top:515px;width:211px;height:18px;background:#fff;border-right:1px solid #C0C0C0;border-bottom:1px solid #C0C0C0"></div><div class="a" style="left:286px;top:533px;width:12px;height:18px;background:#ECE9D8;border-left:1px solid #fff;border-top:1px solid #fff;border-right:1px solid #000;border-bottom:1px solid #000"></div><div class="a" style="left:298px;top:533px;width:112px;height:18px;background:#FFFFE1;border-right:1px solid #C0C0C0;border-bottom:1px solid #C0C0C0"></div><div class="t " style="left:300px;top:536px;">Овощи</div><div class="a" style="left:410px;top:533px;width:98px;height:18px;background:#fff;border-right:1px solid #C0C0C0;border-bottom:1px solid #C0C0C0"></div><div class="a" style="left:508px;top:533px;width:203px;height:18px;background:#fff;border-right:1px solid #C0C0C0;border-bottom:1px solid #C0C0C0"></div><div class="t " style="left:510px;top:536px;">Капуста б\к</div><div class="a" style="left:711px;top:533px;width:45px;height:18px;background:#fff;border-right:1px solid #C0C0C0;border-bottom:1px solid #C0C0C0"></div><div class="t " style="left:711px;top:536px;width:42px;text-align:right">0,75</div><div class="a" style="left:756px;top:533px;width:29px;height:18px;background:#fff;border-right:1px solid #C0C0C0;border-bottom:1px solid #C0C0C0"></div><div class="t " style="left:758px;top:536px;">кг.</div><div class="a" style="left:785px;top:533px;width:211px;height:18px;background:#fff;border-right:1px solid #C0C0C0;border-bottom:1px solid #C0C0C0"></div><div class="a" style="left:286px;top:551px;width:12px;height:18px;background:#ECE9D8;border-left:1px solid #fff;border-top:1px solid #fff;border-right:1px solid #000;border-bottom:1px solid #000"></div><div class="a" style="left:298px;top:551px;width:112px;height:18px;background:#FFFFE1;border-right:1px solid #C0C0C0;border-bottom:1px solid #C0C0C0"></div><div class="t " style="left:300px;top:554px;">Овощи</div><div class="a" style="left:410px;top:551px;width:98px;height:18px;background:#fff;border-right:1px solid #C0C0C0;border-bottom:1px solid #C0C0C0"></div><div class="a" style="left:508px;top:551px;width:203px;height:18px;background:#fff;border-right:1px solid #C0C0C0;border-bottom:1px solid #C0C0C0"></div><div class="t " style="left:510px;top:554px;">Капуста к\к</div><div class="a" style="left:711px;top:551px;width:45px;height:18px;background:#fff;border-right:1px solid #C0C0C0;border-bottom:1px solid #C0C0C0"></div><div class="t " style="left:711px;top:554px;width:42px;text-align:right">0,7</div><div class="a" style="left:756px;top:551px;width:29px;height:18px;background:#fff;border-right:1px solid #C0C0C0;border-bottom:1px solid #C0C0C0"></div><div class="t " style="left:758px;top:554px;">кг.</div><div class="a" style="left:785px;top:551px;width:211px;height:18px;background:#fff;border-right:1px solid #C0C0C0;border-bottom:1px solid #C0C0C0"></div><div class="a" style="left:286px;top:569px;width:12px;height:18px;background:#ECE9D8;border-left:1px solid #fff;border-top:1px solid #fff;border-right:1px solid #000;border-bottom:1px solid #000"></div><div class="a" style="left:298px;top:569px;width:112px;height:18px;background:#FFFFE1;border-right:1px solid #C0C0C0;border-bottom:1px solid #C0C0C0"></div><div class="t " style="left:300px;top:572px;">Овощи</div><div class="a" style="left:410px;top:569px;width:98px;height:18px;background:#fff;border-right:1px solid #C0C0C0;border-bottom:1px solid #C0C0C0"></div><div class="a" style="left:508px;top:569px;width:203px;height:18px;background:#fff;border-right:1px solid #C0C0C0;border-bottom:1px solid #C0C0C0"></div><div class="t " style="left:510px;top:572px;">Лук Зеленый</div><div class="a" style="left:711px;top:569px;width:45px;height:18px;background:#fff;border-right:1px solid #C0C0C0;border-bottom:1px solid #C0C0C0"></div><div class="t " style="left:711px;top:572px;width:42px;text-align:right">5</div><div class="a" style="left:756px;top:569px;width:29px;height:18px;background:#fff;border-right:1px solid #C0C0C0;border-bottom:1px solid #C0C0C0"></div><div class="t " style="left:758px;top:572px;">гр.</div><div class="a" style="left:785px;top:569px;width:211px;height:18px;background:#fff;border-right:1px solid #C0C0C0;border-bottom:1px solid #C0C0C0"></div><div class="a" style="left:286px;top:587px;width:12px;height:18px;background:#ECE9D8;border-left:1px solid #fff;border-top:1px solid #fff;border-right:1px solid #000;border-bottom:1px solid #000"></div><div class="a" style="left:298px;top:587px;width:112px;height:18px;background:#FFFFE1;border-right:1px solid #C0C0C0;border-bottom:1px solid #C0C0C0"></div><div class="t " style="left:300px;top:590px;">Овощи</div><div class="a" style="left:410px;top:587px;width:98px;height:18px;background:#fff;border-right:1px solid #C0C0C0;border-bottom:1px solid #C0C0C0"></div><div class="a" style="left:508px;top:587px;width:203px;height:18px;background:#fff;border-right:1px solid #C0C0C0;border-bottom:1px solid #C0C0C0"></div><div class="t " style="left:510px;top:590px;">Морковь</div><div class="a" style="left:711px;top:587px;width:45px;height:18px;background:#fff;border-right:1px solid #C0C0C0;border-bottom:1px solid #C0C0C0"></div><div class="t " style="left:711px;top:590px;width:42px;text-align:right">3</div><div class="a" style="left:756px;top:587px;width:29px;height:18px;background:#fff;border-right:1px solid #C0C0C0;border-bottom:1px solid #C0C0C0"></div><div class="t " style="left:758px;top:590px;">гр.</div><div class="a" style="left:785px;top:587px;width:211px;height:18px;background:#fff;border-right:1px solid #C0C0C0;border-bottom:1px solid #C0C0C0"></div><div class="a" style="left:286px;top:605px;width:12px;height:18px;background:#ECE9D8;border-left:1px solid #fff;border-top:1px solid #fff;border-right:1px solid #000;border-bottom:1px solid #000"></div><div class="a" style="left:298px;top:605px;width:112px;height:18px;background:#FFFFE1;border-right:1px solid #C0C0C0;border-bottom:1px solid #C0C0C0"></div><div class="t " style="left:300px;top:608px;">Овощи</div><div class="a" style="left:410px;top:605px;width:98px;height:18px;background:#fff;border-right:1px solid #C0C0C0;border-bottom:1px solid #C0C0C0"></div><div class="a" style="left:508px;top:605px;width:203px;height:18px;background:#fff;border-right:1px solid #C0C0C0;border-bottom:1px solid #C0C0C0"></div><div class="t " style="left:510px;top:608px;">Морковь кор</div><div class="a" style="left:711px;top:605px;width:45px;height:18px;background:#fff;border-right:1px solid #C0C0C0;border-bottom:1px solid #C0C0C0"></div><div class="t " style="left:711px;top:608px;width:42px;text-align:right">0,1</div><div class="a" style="left:756px;top:605px;width:29px;height:18px;background:#fff;border-right:1px solid #C0C0C0;border-bottom:1px solid #C0C0C0"></div><div class="t " style="left:758px;top:608px;">кг.</div><div class="a" style="left:785px;top:605px;width:211px;height:18px;background:#fff;border-right:1px solid #C0C0C0;border-bottom:1px solid #C0C0C0"></div><div class="a" style="left:286px;top:623px;width:12px;height:18px;background:#ECE9D8;border-left:1px solid #fff;border-top:1px solid #fff;border-right:1px solid #000;border-bottom:1px solid #000"></div><div class="a" style="left:298px;top:623px;width:112px;height:18px;background:#FFFFE1;border-right:1px solid #C0C0C0;border-bottom:1px solid #C0C0C0"></div><div class="t " style="left:300px;top:626px;">Овощи</div><div class="a" style="left:410px;top:623px;width:98px;height:18px;background:#fff;border-right:1px solid #C0C0C0;border-bottom:1px solid #C0C0C0"></div><div class="a" style="left:508px;top:623px;width:203px;height:18px;background:#fff;border-right:1px solid #C0C0C0;border-bottom:1px solid #C0C0C0"></div><div class="t " style="left:510px;top:626px;">Огурцы св.</div><div class="a" style="left:711px;top:623px;width:45px;height:18px;background:#fff;border-right:1px solid #C0C0C0;border-bottom:1px solid #C0C0C0"></div><div class="t " style="left:711px;top:626px;width:42px;text-align:right">0,5</div><div class="a" style="left:756px;top:623px;width:29px;height:18px;background:#fff;border-right:1px solid #C0C0C0;border-bottom:1px solid #C0C0C0"></div><div class="t " style="left:758px;top:626px;">кг.</div><div class="a" style="left:785px;top:623px;width:211px;height:18px;background:#fff;border-right:1px solid #C0C0C0;border-bottom:1px solid #C0C0C0"></div><div class="a" style="left:286px;top:641px;width:12px;height:18px;background:#ECE9D8;border-left:1px solid #fff;border-top:1px solid #fff;border-right:1px solid #000;border-bottom:1px solid #000"></div><div class="a" style="left:298px;top:641px;width:112px;height:18px;background:#FFFFE1;border-right:1px solid #C0C0C0;border-bottom:1px solid #C0C0C0"></div><div class="t " style="left:300px;top:644px;">Овощи</div><div class="a" style="left:410px;top:641px;width:98px;height:18px;background:#fff;border-right:1px solid #C0C0C0;border-bottom:1px solid #C0C0C0"></div><div class="a" style="left:508px;top:641px;width:203px;height:18px;background:#fff;border-right:1px solid #C0C0C0;border-bottom:1px solid #C0C0C0"></div><div class="t " style="left:510px;top:644px;">Помидоры св.</div><div class="a" style="left:711px;top:641px;width:45px;height:18px;background:#fff;border-right:1px solid #C0C0C0;border-bottom:1px solid #C0C0C0"></div><div class="t " style="left:711px;top:644px;width:42px;text-align:right">0,5</div><div class="a" style="left:756px;top:641px;width:29px;height:18px;background:#fff;border-right:1px solid #C0C0C0;border-bottom:1px solid #C0C0C0"></div><div class="t " style="left:758px;top:644px;">кг.</div><div class="a" style="left:785px;top:641px;width:211px;height:18px;background:#fff;border-right:1px solid #C0C0C0;border-bottom:1px solid #C0C0C0"></div><div class="a" style="left:48px;top:698px;width:976px;height:1px;background:#716F64;"></div><div class="a" style="left:48px;top:699px;width:50px;height:17px;background:#ECE9D8;border:1px solid;border-color:#fff #716F64 #716F64 #fff;border-radius:0 0 3px 3px;box-shadow:inset -1px -1px 0 #ACA899"></div><div class="t " style="left:54px;top:702px;font-size:11px">Заказы</div><div class="a" style="left:100px;top:699px;width:60px;height:17px;background:#ECE9D8;border:1px solid;border-color:#fff #716F64 #716F64 #fff;border-radius:0 0 3px 3px;box-shadow:inset -1px -1px 0 #ACA899"></div><div class="t " style="left:105px;top:702px;font-size:11px">Продукты</div><div class="a" style="left:162px;top:699px;width:51px;height:17px;background:#ECE9D8;border:1px solid;border-color:#fff #716F64 #716F64 #fff;border-radius:0 0 3px 3px;box-shadow:inset -1px -1px 0 #ACA899"></div><div class="t " style="left:166px;top:702px;font-size:11px">Журнал</div><div class="a" style="left:2px;top:698px;width:46px;height:21px;background:#ECE9D8;border:1px solid;border-color:#ECE9D8 #716F64 #716F64 #fff;border-radius:0 0 3px 3px;box-shadow:inset -1px -1px 0 #ACA899"></div><div class="t " style="left:8px;top:704px;font-size:11px">Блюда</div><div class="a" style="left:0px;top:721px;width:158px;height:17px;border:1px solid;border-color:#ACA899 #fff #fff #ACA899"></div><div class="t " style="left:4px;top:724px;font-size:11px;letter-spacing:-0.1px">K-236 (k_236_softlab@mail.ru)</div><div class="a" style="left:161px;top:721px;width:198px;height:17px;border:1px solid;border-color:#ACA899 #fff #fff #ACA899"></div><div class="t " style="left:163px;top:724px;font-size:11px;letter-spacing:-0.1px">Работа с блюдами</div><div class="a" style="left:362px;top:721px;width:660px;height:17px;border:1px solid;border-color:#ACA899 #fff #fff #ACA899"></div><div class="t " style="left:364px;top:724px;font-size:11px;letter-spacing:-0.1px">Изменение и создание новых блюд, принятие заказов .</div><div class="a" style="left:0px;top:738px;width:1024px;height:30px;background:linear-gradient(180deg,#3A80EC 0%,#2663E0 10%,#245EDC 50%,#2157D0 90%,#1A46B0 100%);"></div><div class="a" style="left:0;top:738px;width:97px;height:30px;border-radius:0 10px 10px 0/0 15px 15px 0;background:linear-gradient(180deg,#5CB85C 0%,#3E9E3E 14%,#389838 50%,#359035 85%,#2A782A 100%);box-shadow:1px 0 2px #1A3F9A"></div><svg class="a" style="left:10px;top:743px" width="21" height="20"><path d="M3 2q3-2 7 0l-1.500 7q-4-2-7 0z" fill="#E8602C"/><path d="M11 2.500q4 2 8 0l-1.500 7q-4 2-8 0z" fill="#78C040"/><path d="M1.500 10.500q3-2 7 0l-1.500 7q-4-2-7 0z" fill="#5088E0"/><path d="M9.500 11q4 2 8 0l-1.500 7q-4 2-8 0z" fill="#F0C020"/></svg><div class="t b w" style="left:35px;top:742px;font-size:19px;line-height:22px;height:22px;font-style:italic;text-shadow:1px 1px 1px #1C5C1C;transform:scaleX(0.88);transform-origin:0 0">пуск</div><svg class="a" style="left:108px;top:745px" width="16" height="16"><path d="M2 5q1-4 6-3l3-1.500l2 1l-1 2.500l2 1l-2 2q1 4-2 6q-3 2-7 0q-3-3-1-8z" fill="#F4F0E0" stroke="#C8D8F0" stroke-width="0.500"/><path d="M4.500 5.500h5.500v2h-3.500v1.500h3v2h-5z" fill="#3C64C8"/><path d="M6 8.500l3-2.500" stroke="#101840"/><path d="M11 2.500l2.500 1" stroke="#202040"/></svg><svg class="a" style="left:131px;top:745px" width="16" height="17"><rect x="0" y="0" width="15.500" height="13" fill="#48D0FF"/><rect x="1" y="1" width="6" height="11.500" fill="#0A14E4"/><rect x="8.500" y="1" width="6" height="11.500" fill="#0A14E4"/><path d="M2 3h4M2 5h4M2 7h3M9.500 3h4M9.500 5h4M9.500 7h3" stroke="#48D0FF"/><path d="M0 12.500h15.500" stroke="#0814B0"/><path d="M0.500 15h15" stroke="#48D0FF" stroke-dasharray="1.500 1"/></svg><svg class="a" style="left:154px;top:745px" width="16" height="16"><rect width="16" height="16" fill="#0A1084"/><rect x="2" y="2.500" width="11.500" height="1.500" fill="#fff"/><rect x="2" y="5.500" width="11.500" height="7.500" fill="#fff"/><path d="M3.500 5.500l1.800 7h1.500l1.200-4l1.200 4h1.500l1.800-7" fill="none" stroke="#0A1084" stroke-width="1.800"/></svg><svg class="a" style="left:177px;top:745px" width="16" height="16"><rect x="0.500" y="0.500" width="15" height="15" fill="#E4F4E0" stroke="#2C7C2C" stroke-dasharray="1 1"/><path d="M3 3l10 10M13 3l-10 10" stroke="#3C8C3C" stroke-width="3.200"/></svg><svg class="a" style="left:201px;top:745px" width="16" height="16"><rect x="0" y="0" width="14" height="3.500" fill="#B85818"/><rect x="0" y="0" width="14" height="1" fill="#302018"/><rect x="0" y="3.500" width="14" height="7.500" fill="#F8F4EC" stroke="#403020" stroke-width="0.600"/><path d="M2 6h7M3 8h8" stroke="#9070C8"/><path d="M0 11h14v2h-8l-2 3h-4z" fill="#181810"/><rect x="1" y="11.500" width="3.500" height="4" fill="#E01818"/></svg><svg class="a" style="left:224px;top:745px" width="16" height="16"><ellipse cx="7.500" cy="7" rx="7" ry="3.600" transform="rotate(-48 7.500 7)" fill="#98A088" stroke="#202018"/><path d="M5 10l5-7" stroke="#485040"/><path d="M2 14.500h11" stroke="#202018" stroke-width="2"/><path d="M7 11l1 3" stroke="#202018" stroke-width="1.500"/><path d="M0 1l3 2.500" stroke="#A01818" stroke-width="1.500"/></svg><svg class="a" style="left:248px;top:745px" width="16" height="16"><path d="M1.500 0.500h8.500l1 1v13.500l-1 0.500h-8.500z" fill="#B4CCE8" stroke="#88A8D8"/><rect x="3" y="2" width="6" height="3.500" fill="#E4F0FC"/><path d="M3 7.500h6M3 9.500h6M3 11.500h6M3 13.500h6" stroke="#7C9CD0" stroke-dasharray="1.400 0.900"/><path d="M10.500 2v13" stroke="#6C88C0"/></svg><svg class="a" style="left:270px;top:745px" width="16" height="16"><path d="M0.500 4l6 4l-5.500 4.500z" fill="#F01484"/><path d="M14 2.500l-5.500 5l5 3.500z" fill="#F01484"/><path d="M5.500 7l3.500 1.500l-3 1z" fill="#D00868"/></svg><div class="a" style="left:305px;top:741px;width:159px;height:25px;border-radius:3px;background:linear-gradient(180deg,#5C9CFA 0%,#3C81F3 15%,#3C81F3 85%,#2E6CE0 100%)"></div><svg class="a" style="left:315px;top:746px" width="16" height="17"><rect x="0" y="0" width="15.500" height="13" fill="#48D0FF"/><rect x="1" y="1" width="6" height="11.500" fill="#0A14E4"/><rect x="8.500" y="1" width="6" height="11.500" fill="#0A14E4"/><path d="M2 3h4M2 5h4M2 7h3M9.500 3h4M9.500 5h4M9.500 7h3" stroke="#48D0FF"/><path d="M0 12.500h15.500" stroke="#0814B0"/><path d="M0.500 15h15" stroke="#48D0FF" stroke-dasharray="1.500 1"/></svg><div class="t w" style="left:337px;top:747px;font-size:11px;line-height:14px;height:14px;letter-spacing:-0.1px">{F:\BCB_Projects\BC...</div><div class="a" style="left:465px;top:741px;width:159px;height:25px;border-radius:3px;background:#1E52B7;box-shadow:inset 1px 1px 1px #123A90"></div><div class="a" style="left:476px;top:748px;width:15px;height:11px;background:#fff"></div><div class="t b" style="left:477px;top:747px;font-size:8px;line-height:11px;letter-spacing:-0.5px"><span style="color:#000">bri</span><span style="color:#e00000">z</span></div><div class="t w" style="left:496px;top:747px;font-size:11px;line-height:14px;height:14px;letter-spacing:-0.1px">bc</div><div class="a" style="left:878px;top:747px;width:18px;height:14px;background:rgba(255,255,255,0.09);"></div><div class="t w" style="left:881px;top:748px;font-size:11px">EN</div><svg class="a" style="left:905px;top:745px" width="12" height="18"><rect x="3.500" y="1.500" width="6" height="4" fill="none" stroke="#fff"/><path d="M3 2h7" stroke="#fff"/><rect x="1.500" y="3.500" width="6" height="4" fill="#245EDC" stroke="#fff"/><path d="M2.500 13h6l-3 3z" fill="#fff"/></svg><div class="a" style="left:931px;top:738px;width:93px;height:30px;background:linear-gradient(180deg,#48B0F8 0%,#1696F0 10%,#0F8EE8 50%,#0E82D8 90%,#0A60B0 100%);box-shadow:inset 1px 0 0 #0A4FB0"></div><svg class="a" style="left:942px;top:744px" width="17" height="18"><circle cx="10" cy="4" r="3" fill="#3C8848"/><path d="M5 14q0-7 5-7q5 0 5 7z" fill="#3C8848"/><circle cx="5" cy="6" r="3" fill="#A8D0F0"/><path d="M0 16q0-7 5-7q5 0 5 7z" fill="#88B8E8"/><circle cx="12" cy="13" r="4" fill="#E02818" stroke="#fff" stroke-width="0.500"/><path d="M10.500 11.500l3 3M13.500 11.500l-3 3" stroke="#fff" stroke-width="1.300"/></svg><div class="t b" style="left:961px;top:744px;font-size:19px;line-height:20px;height:20px;color:#F01020">N</div><div class="t w" style="left:983px;top:748px;font-size:11px">18:48</div></body></html>
